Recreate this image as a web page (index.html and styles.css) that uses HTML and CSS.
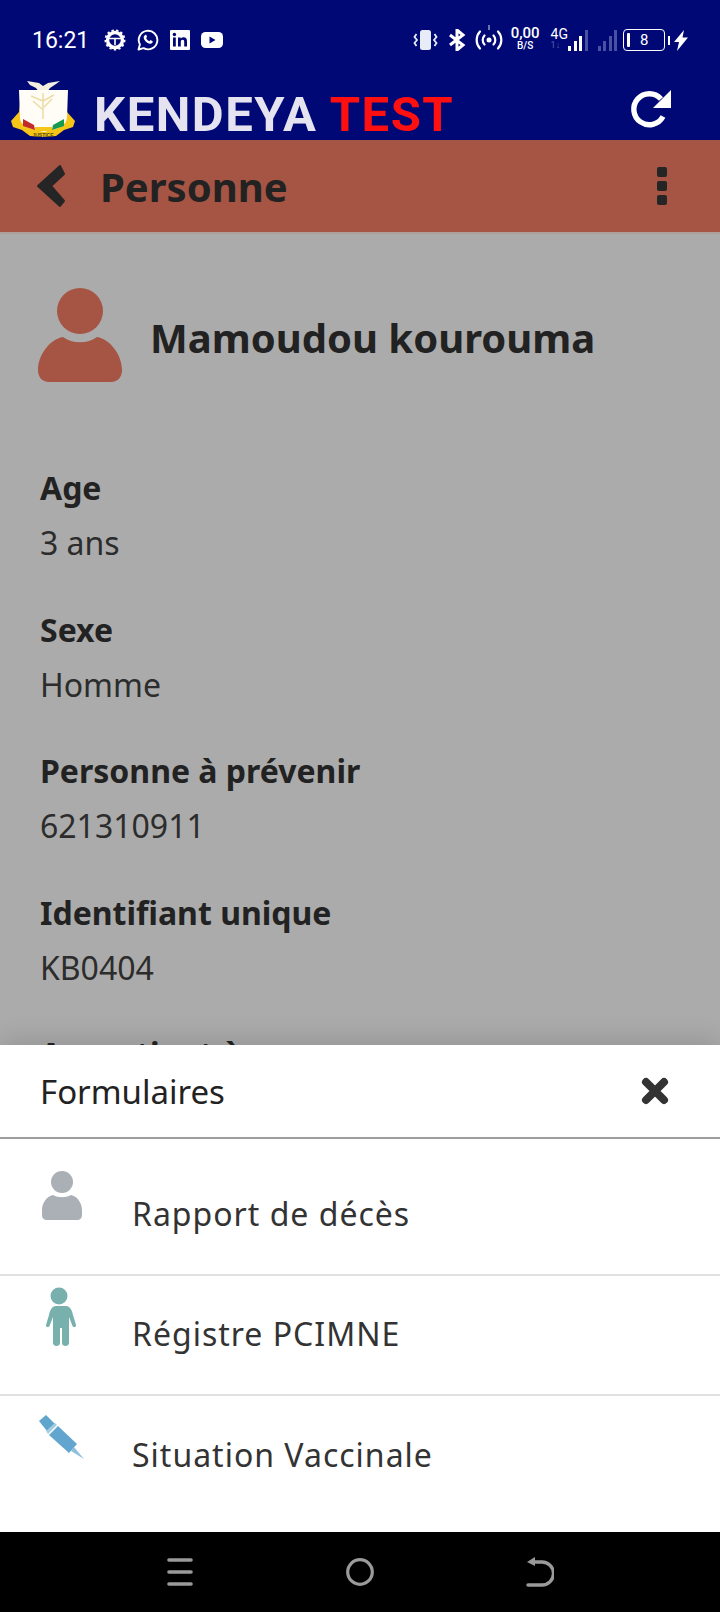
FILE: index.html
```html
<!DOCTYPE HTML>
<html>
<head>
    <meta charset="utf-8">
    <title>Kendeya</title>
    <link rel="stylesheet" href="styles.css">
</head>
<body>
<div class="phone">
    <div class="top">
        <div class="status">
            <div class="status-left">
                <span class="time">16:21</span>
                <svg width="22" height="22" viewBox="0 0 22 22"><circle cx="11" cy="11" r="7.5" fill="none" stroke="#fff" stroke-width="3.4"/><circle cx="11" cy="11" r="9.6" fill="none" stroke="#fff" stroke-width="1.8" stroke-dasharray="2.4 2.2"/><path d="M5 9.5h12M11 10v6" stroke="#fff" stroke-width="1.6"/></svg>
                <svg width="22" height="22" viewBox="0 0 22 22"><path d="M1.5 20.500l1.400-5A9.300 9.300 0 1 1 6.600 19.200z" fill="none" stroke="#fff" stroke-width="1.900" stroke-linejoin="round"/><path d="M7.500 6.500c-1.500 1.500-.8 3.800 1 5.800s4 3 5.800 2.200c1.200-.6 1.600-1.600 1.400-2.300l-2.300-1.100-1 1.200c-1.300-.4-2.800-1.900-3.300-3.300l1-1-1-2.500z" fill="#fff"/></svg>
                <svg width="20" height="20" viewBox="0 0 20 20"><rect width="20" height="20" rx="1" fill="#fff"/><rect x="3" y="7.500" width="2.800" height="9" fill="#000875"/><circle cx="4.400" cy="4.500" r="1.700" fill="#000875"/><path d="M8 7.500h2.700v1.300c.6-1 1.700-1.500 2.900-1.500 2.400 0 3.400 1.500 3.400 4v5.200h-2.800v-4.800c0-1.200-.4-2-1.500-2-1.200 0-1.900.8-1.900 2.100v4.700H8z" fill="#000875"/></svg>
                <svg width="22" height="16" viewBox="0 0 22 16"><rect width="22" height="16" rx="4.500" fill="#fff"/><path d="M8.500 4.500l6 3.500-6 3.500z" fill="#000875"/></svg>
            </div>
            <div class="status-right">
                <svg class="vib" width="25" height="20" viewBox="0 0 25 20"><rect x="7" y="0" width="11" height="20" rx="2.500" fill="#e8ecf6"/><path d="M3.500 4L1.500 7l2.500 3-2.500 3 2 3M21.500 4l2 3-2.500 3 2.500 3-2 3" fill="none" stroke="#e8ecf6" stroke-width="1.800"/></svg>
                <svg class="bt" width="18" height="22" viewBox="0 0 18 22"><path d="M2 6l13 10-6 5V1l6 5L2 16" fill="none" stroke="#fff" stroke-width="3"/></svg>
                <svg class="hot" width="28" height="26" viewBox="0 0 28 26"><path d="M14 0v5" stroke="#d8dcec" stroke-width="1"/><circle cx="14" cy="15" r="2.500" fill="#fff"/><path d="M9.500 10.500a6.500 6.500 0 0 0 0 9M18.500 10.500a6.500 6.500 0 0 1 0 9M5 6.500a12.500 12.500 0 0 0 0 17M23 6.500a12.500 12.500 0 0 1 0 17" fill="none" stroke="#fff" stroke-width="2.200" stroke-linecap="round"/></svg>
                <div class="speed"><b>0,00</b><i>B/S</i></div>
                <div class="net"><b>4G</b><i>1↓</i></div>
                <div class="bars">
                    <span class="b1"></span><span class="b2"></span><span class="b3"></span><span class="b4 dim"></span>
                </div>
                <div class="bars second">
                    <span class="b1 dim"></span><span class="b2 dim"></span><span class="b3 dim"></span><span class="b4 dim"></span>
                </div>
                <div class="battery"><span class="level"></span><span class="pct">8</span></div>
                <span class="nub"></span>
                <svg width="16" height="21" viewBox="0 0 16 21"><path d="M11 0L1 12h5L4 21l11-13.500H9.500z" fill="#fff"/></svg>
            </div>
        </div>
        <div class="brand">
            <div class="brand-left">
                <svg class="crest" width="66" height="59" viewBox="0 0 66 59">
                    <path d="M17 1l12 2 4 3 5-3 12-2-4 3-6 4-3 4h-8l-3-4-6-3z" fill="#f3eedd"/>
                    <path d="M9 12l3 4-2 8-1 8-8 9 2 6 9 3 8 6 13 1 13-1 8-6 9-3 2-6-8-9-1-8-2-8 3-4-8 2H17z" fill="#f5c518"/>
                    <path d="M9 10h49l-1 28c-1 6-5 9-12 11l-11 3-11-3c-7-2-13-5-13-11z" fill="#fffdf6"/>
                    <path d="M33 13v26M33 21l-12-5M33 21l11-6M32 29l-9-8M34 27l8-8" stroke="#ecdca8" stroke-width="1.600" fill="none"/>
                    <path d="M13 39l11 6 1 5-12-4z" fill="#c2292c"/>
                    <path d="M54 39l-11 6-1 5 12-4z" fill="#159a50"/>
                    <path d="M25 47h17v4H25z" fill="#f5c518"/>
                    <text class="motto" x="33" y="57" text-anchor="middle">JUSTICE</text>
                </svg>
                <div class="brand-name">KENDEYA <span>TEST</span></div>
            </div>
            <svg class="refresh" width="42" height="42" viewBox="0 0 42 42"><path d="M33 27.500A15.500 15.500 0 1 1 31 10" fill="none" stroke="#fff" stroke-width="5.400"/><path d="M41 1v18H23z" fill="#fff"/></svg>
        </div>
    </div>

    <div class="titlebar">
        <div class="titlebar-left">
            <svg class="back" width="30" height="44" viewBox="0 0 30 44"><path d="M2 22L24 2l4 8-13 12 13 15-4 5z" fill="#252525" stroke="#252525" stroke-width="2" stroke-linejoin="round"/></svg>
            <h1>Personne</h1>
        </div>
        <div class="dots"><span></span><span></span><span></span></div>
    </div>

    <div class="content">
        <div class="person">
            <svg width="84" height="94" viewBox="0 0 84 94">
                <circle cx="42" cy="23" r="23" fill="#a65444"/>
                <path d="M25 49c9 7 25 7 34 0 13 2 25 18 25 33 0 7-4 12-11 12H11C4 94 0 89 0 82c0-15 12-31 25-33z" fill="#a65444"/>
            </svg>
            <h2>Mamoudou kourouma</h2>
        </div>
        <div class="field"><h3>Age</h3><p>3 ans</p></div>
        <div class="field"><h3>Sexe</h3><p>Homme</p></div>
        <div class="field"><h3>Personne à prévenir</h3><p>621310911</p></div>
        <div class="field"><h3>Identifiant unique</h3><p>KB0404</p></div>
        <div class="field"><h3>Appartient à</h3></div>
    </div>

    <div class="sheet">
        <div class="sheet-head">
            <span>Formulaires</span>
            <svg width="28" height="28" viewBox="0 0 28 28"><path d="M5 5l18 18M23 5L5 23" stroke="#333" stroke-width="8" stroke-linecap="round"/></svg>
        </div>
        <div class="row row-first">
            <svg class="row-icon" width="40" height="50" viewBox="0 0 40 50">
                <circle cx="20" cy="11" r="11" fill="#abafb6"/>
                <path d="M11 24c5 3 13 3 18 0 6 1 11 8 11 15v5c0 3-2 5-5 5H5c-3 0-5-2-5-5v-5c0-7 5-14 11-15z" fill="#abafb6"/>
            </svg>
            <span>Rapport de décès</span>
        </div>
        <div class="row row-second">
            <svg class="row-icon" width="40" height="60" viewBox="0 0 40 60">
                <circle cx="20" cy="9" r="8.500" fill="#78b0ae"/>
                <path d="M13 19h14c4 0 6 4 7 9l3 10c.5 2-2.500 3-3.500 1L30 30v26c0 4-7 4-7 0V41h-2v15c0 4-7 4-7 0V30l-3.500 9c-1 2-4 1-3.500-1l3-10c1-5 3-9 7-9z" fill="#78b0ae"/>
            </svg>
            <span>Régistre PCIMNE</span>
        </div>
        <div class="row row-third">
            <svg class="row-icon" width="46" height="46" viewBox="0 0 46 46">
                <path d="M1 7l7-6 9 9-8 7z" fill="#5fa5cc"/>
                <path d="M8 17l9-8 2 2-9 9z" fill="#a4cde3"/>
                <path d="M11 21l9-9 19 18-8 9z" fill="#62a6d0"/>
                <path d="M33 37l3-4 10 12z" fill="#8fc0dc"/>
            </svg>
            <span>Situation Vaccinale</span>
        </div>
    </div>

    <div class="navbar">
        <svg width="28" height="28" viewBox="0 0 28 28"><path d="M3 2h22M3 14h22M3 26h22" stroke="#9a9a9a" stroke-width="3.600" stroke-linecap="round"/></svg>
        <svg width="28" height="28" viewBox="0 0 28 28"><circle cx="14" cy="14" r="12.300" fill="none" stroke="#9a9a9a" stroke-width="3.200"/></svg>
        <svg width="28" height="30" viewBox="0 0 28 30"><path d="M7 5h9a10.500 10.500 0 0 1 0 23H2" fill="none" stroke="#9a9a9a" stroke-width="3.400" stroke-linecap="round"/><path d="M9 0L1 5l8 4z" fill="#9a9a9a"/></svg>
    </div>
</div>
</body>
</html>
```

FILE: styles.css
```css
* {
    box-sizing: border-box;
}
body {
    margin: 0;
    font-family: "Noto Sans", "Open Sans", sans-serif;
    background-color: #ababab;
    color: #222;
}
h1, h2, h3, p {
    margin: 0;
}
svg {
    display: block;
    flex: none;
}
.phone {
    position: relative;
    width: 720px;
    height: 1612px;
    overflow: hidden;
    display: flex;
    flex-direction: column;
}

/* status bar + app brand */
.top {
    height: 140px;
    background-color: #000875;
    color: #fff;
}
.status {
    height: 80px;
    padding: 0 31px 0 32px;
    display: flex;
    justify-content: space-between;
    align-items: center;
}
.status-left {
    display: flex;
    align-items: center;
    gap: 11px;
}
.time {
    font-family: Roboto, sans-serif;
    font-size: 23px;
    margin-right: 4px;
}
.status-right {
    display: flex;
    align-items: center;
}
.bt {
    margin-left: 10px;
}
.hot {
    margin-left: 9px;
    margin-top: -4px;
}
.speed, .net {
    font-family: Roboto, sans-serif;
    display: flex;
    flex-direction: column;
    align-items: center;
    line-height: 1;
}
.speed {
    margin-left: 8px;
    margin-top: -4px;
}
.speed b {
    font-size: 15px;
    font-weight: 500;
}
.speed i {
    font-size: 10px;
    font-style: normal;
    font-weight: 500;
}
.net {
    margin-left: 11px;
    margin-top: -4px;
    align-items: flex-start;
}
.net b {
    font-size: 14px;
    font-weight: 400;
}
.net i {
    font-size: 9px;
    font-style: normal;
    color: #5c63a8;
}
.bars {
    display: flex;
    align-items: flex-end;
    gap: 2.500px;
    height: 21px;
}
.bars.second {
    margin-left: 10px;
}
.bars span {
    width: 3px;
    background-color: #fff;
}
.bars .dim {
    background-color: #4a51a0;
}
.b1 { height: 5px; }
.b2 { height: 10px; }
.b3 { height: 15px; }
.b4 { height: 21px; }
.battery {
    width: 42px;
    height: 22px;
    margin-left: 6px;
    padding-left: 3px;
    border: 1.500px solid #fff;
    border-radius: 4px;
    display: flex;
    align-items: center;
}
.level {
    width: 3px;
    height: 14px;
    background-color: #fff;
    border-radius: 1px;
}
.pct {
    font-family: Roboto, sans-serif;
    font-size: 15px;
    margin-left: 10px;
}
.nub {
    width: 2px;
    height: 9px;
    margin: 0 3px 0 3px;
    background-color: #fff;
}
.brand {
    height: 60px;
    padding-left: 10px;
    padding-right: 48px;
    display: flex;
    justify-content: space-between;
    align-items: flex-start;
}
.brand-left {
    display: flex;
    align-items: flex-start;
    gap: 18px;
}
.motto {
    font-family: "Liberation Sans", sans-serif;
    font-size: 5px;
    font-weight: 700;
    fill: #5a4a10;
}
.brand-name {
    font-family: Roboto, sans-serif;
    font-size: 49px;
    font-weight: 700;
    letter-spacing: 1.500px;
    color: #e6e3f0;
    line-height: 60px;
    margin-top: 5px;
    white-space: nowrap;
}
.brand-name span {
    color: #fe1010;
}
.refresh {
    margin-top: 9px;
}

/* page title */
.titlebar {
    height: 94px;
    padding: 0 53px 0 36px;
    background-color: #a65444;
    border-bottom: 2px solid #b0a09c;
    display: flex;
    justify-content: space-between;
    align-items: center;
}
.titlebar-left {
    display: flex;
    align-items: center;
    gap: 34px;
}
h1 {
    font-size: 40px;
    font-weight: 700;
}
.dots {
    display: flex;
    flex-direction: column;
    gap: 4px;
}
.dots span {
    width: 10px;
    height: 10px;
    border-radius: 2px;
    background-color: #252525;
}

/* person details */
.content {
    flex: 1;
    padding: 54px 40px 0;
    background-color: #ababab;
}
.person {
    display: flex;
    align-items: center;
    gap: 28px;
    margin: 0 0 85px -2px;
}
h2 {
    font-size: 40px;
    font-weight: 700;
    margin-top: 4px;
}
.field {
    margin-bottom: 44.500px;
}
h3 {
    font-size: 32px;
    font-weight: 700;
    line-height: 42px;
}
.field p {
    font-size: 32px;
    line-height: 42px;
    margin-top: 13px;
    color: #2c2c2c;
}

/* bottom sheet, sits over the details */
.sheet {
    position: absolute;
    left: 0;
    right: 0;
    bottom: 80px;
    background-color: #fff;
    color: #333;
    box-shadow: 0 -6px 24px rgba(0, 0, 0, 0.12);
}
.sheet-head {
    height: 94px;
    padding: 0 51px 0 40px;
    border-bottom: 2px solid #9e9e9e;
    display: flex;
    justify-content: space-between;
    align-items: center;
    font-size: 33px;
    color: #222;
}
.row {
    padding-left: 42px;
    display: flex;
    font-size: 32px;
    letter-spacing: 1px;
    border-bottom: 2px solid #e0e0e0;
}
.row span {
    margin-left: 50px;
}
.row-first {
    height: 137px;
    padding-top: 32px;
}
.row-first span {
    margin-top: 21px;
}
.row-second {
    height: 120px;
    padding-top: 11px;
    padding-left: 39px;
}
.row-second span {
    margin-left: 53px;
    margin-top: 25px;
}
.row-third {
    height: 136px;
    padding-top: 18px;
    padding-left: 38px;
    border-bottom: 0;
}
.row-third span {
    margin-left: 48px;
    margin-top: 19px;
}
.navbar {
    position: absolute;
    left: 0;
    right: 0;
    bottom: 0;
    height: 80px;
    padding: 0 90px;
    background-color: #000;
    display: grid;
    grid-template-columns: repeat(3, 1fr);
    justify-items: center;
    align-items: center;
}
```
